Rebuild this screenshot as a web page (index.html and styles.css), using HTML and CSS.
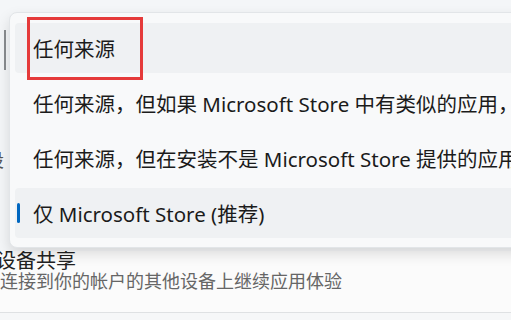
FILE: index.html
```html
<!DOCTYPE html>
<html lang="zh-CN">
<head>
  <meta charset="UTF-8" />
  <title>选择获取应用的位置</title>
  <link rel="stylesheet" href="styles.css">
</head>
<body>
  <div class="page">
    <div class="card-top">
      <span class="edge-mark"></span>
      <span class="edge-text">设</span>
    </div>
    <div class="card">
      <div class="card-title">设备共享</div>
      <div class="card-desc">连接到你的帐户的其他设备上继续应用体验</div>
    </div>
    <div class="card-next"></div>
  </div>

  <div class="menu">
    <div class="menu-item hover">任何来源</div>
    <div class="menu-item">任何来源，但如果 Microsoft Store 中有类似的应用，</div>
    <div class="menu-item">任何来源，但在安装不是 Microsoft Store 提供的应用时警告我</div>
    <div class="menu-item selected">仅 Microsoft Store (推荐)</div>
  </div>

  <div class="mark-box"></div>
</body>
</html>
```

FILE: styles.css
```css
body {
  margin: 0;
  width: 511px;
  height: 320px;
  overflow: hidden;
  background: #f1f4f7;
  font-family: "Noto Sans", "Noto Sans CJK SC", sans-serif;
  color: #1b1b1b;
}

.page {
  display: flex;
  flex-direction: column;
}

.card-top {
  height: 251px;
  position: relative;
  background: #f4f6f8;
}

.edge-mark {
  display: block;
  width: 2px;
  height: 40px;
  margin: 30px 0 0 4px;
  background: #8a8d90;
}

.edge-text {
  display: block;
  margin: 76px 0 0 -14px;
  font-size: 18px;
  color: #555;
}

.card {
  background: #fbfbfb;
  height: 62px;
  border-bottom: 1px solid #dfe1e3;
  box-sizing: border-box;
}

.card-title {
  margin-left: -4px;
  font-size: 20px;
  line-height: 20px;
  color: #222;
}

.card-desc {
  font-size: 18px;
  line-height: 20px;
  color: #666;
}

.card-next {
  height: 20px;
  background: #f6f7f8;
}

.menu {
  position: absolute;
  left: 9px;
  top: 12px;
  width: 540px;
  padding: 10px 0 9px;
  background: #f8f9fa;
  border: 1px solid #e2e5e8;
  border-radius: 8px;
  box-shadow: 0 6px 14px rgba(0, 0, 0, 0.13);
  display: flex;
  flex-direction: column;
  gap: 5px;
}

.menu-item {
  position: relative;
  height: 50px;
  margin-left: 5px;
  padding-left: 18px;
  display: flex;
  align-items: center;
  font-size: 20.5px;
  white-space: nowrap;
  border-radius: 4px;
}

.menu-item.hover,
.menu-item.selected {
  background: #eff1f3;
}

.menu-item.selected::before {
  content: "";
  position: absolute;
  left: 2px;
  top: 15px;
  width: 3px;
  height: 20px;
  border-radius: 2px;
  background: #0067c0;
}

.mark-box {
  position: absolute;
  left: 27px;
  top: 17px;
  width: 110px;
  height: 57px;
  border: 3px solid #e53a3a;
}
```
